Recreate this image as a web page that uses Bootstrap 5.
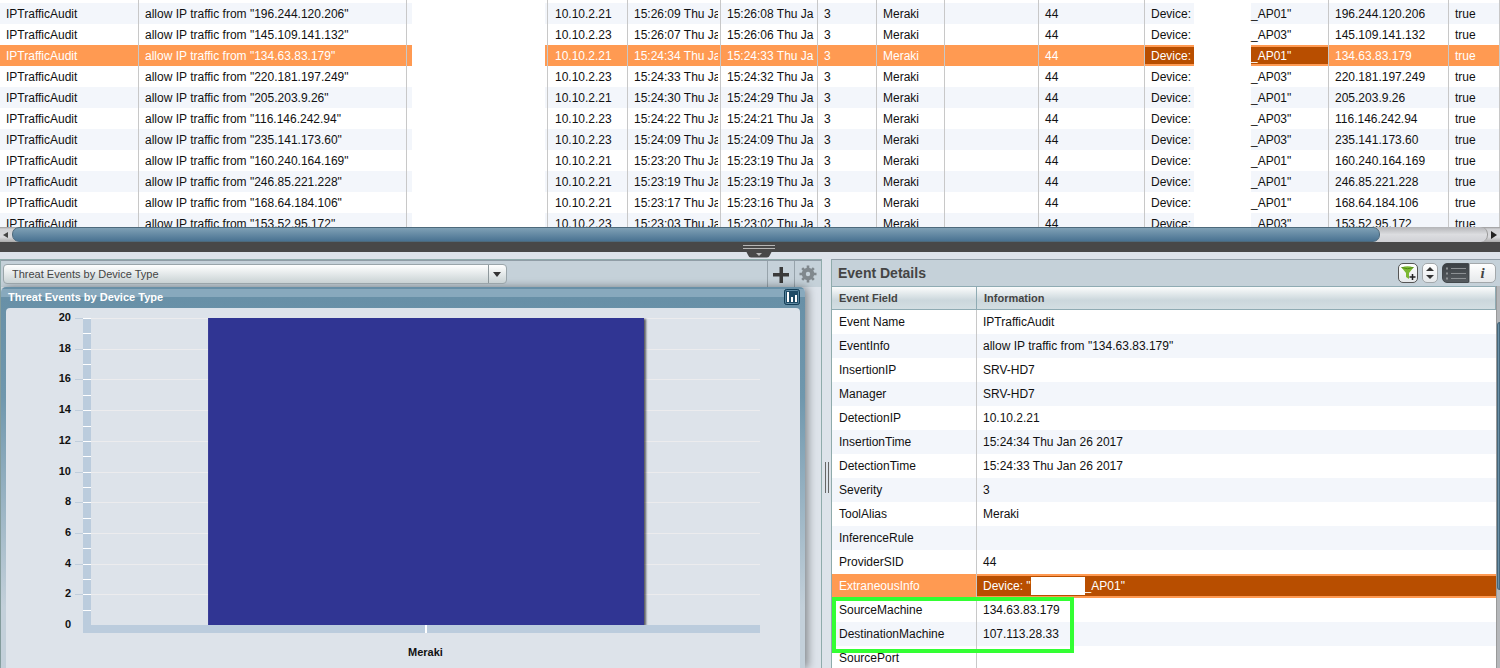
<!DOCTYPE html>
<html lang="en">
<head>
<meta charset="utf-8">
<meta name="viewport" content="width=device-width, initial-scale=1">
<title>Threat Events</title>
<link rel="stylesheet" href="https://cdn.jsdelivr.net/npm/bootstrap@5.3.0/dist/css/bootstrap.min.css">
<style>
  :root { --line:#c8c8c8; --stripe:#f3f6fb; --sel:#ff9a52; --seldark:#b84e00; --canvas:#dde3ea; --bar:#c5d1d9; --edge:#8fabab; }
  body { font-family:"Liberation Sans", Arial, sans-serif; font-size:12px; line-height:16px; color:#111; background:var(--canvas); }
  .events-pane { flex:0 0 34%; background:#fff; }
  .grid-table { table-layout:fixed; width:100%; border-collapse:separate; border-spacing:0; white-space:nowrap; }
  .grid-table td { height:21px; padding:3px 2px 2px 6px; border-right:1px solid var(--line); overflow:hidden; line-height:16px; }
  .grid-table td:nth-child(3) { padding:0 2px 0 5px; }
  .grid-table td:nth-child(4) { padding-left:7px; }
  .grid-table td > div { overflow:hidden; }
  .grid-table tr:nth-child(even) td { background:var(--stripe); }
  .grid-table tr:first-child td { height:3px; padding:0; background:#fff; }
  .grid-table tr.picked td { background:var(--sel); color:#fff; }
  .grid-table td.device { padding:0 0 0 6px; }
  .grid-table tr.picked td.device { background:linear-gradient(var(--sel) 2px,var(--seldark) 2px,var(--seldark) 19px,var(--sel) 19px); }
  .device .lead-in { width:43px; }
  .blank { background:#fff; height:21px; }
  .device .blank { width:57px; }
  .hscroll { height:15px; background:linear-gradient(#999,#d0d1d4 2px,#d9dadd 10px,#aaa); }
  .hscroll button, .tool { border:0; background:none; padding:0; }
  .hscroll button { width:12px; line-height:0; }
  .hscroll .track { border-radius:7px; background:linear-gradient(#b4b5b8,#dcdde0 50%,#d0d1d5); border-right:1px solid #999; }
  .hscroll .thumb { width:1368px; max-width:93%; border-radius:7px; background:linear-gradient(#7fa0b5,#4a7392); border:1px solid #4d6a7c; }
  .splitter { height:10px; background:#484848; }
  .splitter svg { top:2px; left:742px; }
  .workspace { padding-top:7px; }
  .left-pane { flex:0 0 822px; border:1px solid var(--edge); border-bottom:0; }
  .pane-tools { height:27px; background:var(--bar); }
  .left-pane > .pane-tools { border-top:1px solid #909da6; }
  .report-pick { width:504px; height:20px; margin-left:2px; padding:0 8px; font-size:11px; line-height:16px; border:1px solid #9aa5aa; border-radius:4px; color:#444; appearance:none; background:linear-gradient(#fff,#c9d2d4); }
  .pick-wrap .arrow { right:0; top:1px; pointer-events:none; }
  .tool { width:27px; height:27px; border-left:1px solid #97a3ab; }
  .chart-shell { background:var(--canvas); }
  .chart-window { width:804px; padding:0 5px; border-radius:5px 5px 0 0; background:linear-gradient(#6890a7 2px,#88a9bd 2px,#88a9bd 10px,#6890a7 10px,#6f97ad 110px,#c3d0da 320px); box-shadow:3px 0 8px rgba(0,0,0,.4); }
  .chart-title { height:21px; padding-bottom:2px; font-size:11px; line-height:16px; font-weight:700; color:#fff; padding-left:2px; }
  .chart-body { background:var(--canvas); border-radius:4px 4px 0 0; padding:10px 40px 35px 0; font-size:11px; font-weight:700; }
  .y-labels { width:65px; margin:-9px 0 -7px; text-align:right; }
  .y-labels span { line-height:16px; }
  .ticks { width:8px; margin-left:4px; }
  .ticks div, .lines div { border-top:1px solid #c0cedc; }
  .y-axis { width:8px; background:#bbccdd; }
  .y-axis div { border-top:1px solid #fff; }
  .lines div { border-color:#ececee; }
  .series { left:17.5%; width:65.2%; background:#303593; box-shadow:2px 1px 2px rgba(0,0,0,.6); clip-path:inset(0 -6px 0 0); }
  .x-axis { height:8px; margin-left:77px; background:#bbccdd; }
  .x-axis i { width:2px; height:8px; background:#fff; margin-left:8px; }
  .x-label { margin:11px 0 -35px 85px; height:24px; line-height:16px; }
  .grip { flex:0 0 9px; padding-bottom:0; }
  .grip i { width:4px; height:31px; margin-top:28px; border:solid #666; border-width:0 1px; }
  .details-pane { min-width:0; border-left:1px solid var(--edge); border-top:1px solid #909da6; background:#fff; }
  .details-pane .pane-tools { height:26px; }
  .details-pane h2 { font-size:14px; line-height:26px; margin:0; font-weight:700; color:#444; padding-left:6px; }
  .mini { height:20px; padding:0; border:1px solid #a3a8ab; border-radius:5px; background:linear-gradient(#fff,#e6e9eb); line-height:0; }
  .mini.wide { width:27px; }
  .mini.dark { background:linear-gradient(#3c4145,#565b5f); border-color:#44494d; border-radius:5px 0 0 5px; }
  .mini.info { border-radius:0 5px 5px 0; font:italic 700 15px/18px "Liberation Serif", serif; color:#444; }
  .detail-table { table-layout:fixed; width:100%; border-collapse:separate; border-spacing:0; white-space:nowrap; }
  .detail-table th { height:24px; padding:0 7px 1px; font-size:11px; line-height:16px; color:#444; background:linear-gradient(#fbfcfc,#cbd7dc 60%,#d3dee2); border:solid #8fabb3; border-width:1px 1px 1px 0; }
  .detail-table td { height:24px; padding:0 7px; line-height:16px; border-right:1px solid var(--line); }
  .detail-table td:last-child { border-right:0; padding-left:6px; }
  .detail-table tbody tr:nth-child(even) td { background:var(--stripe); }
  .detail-table tbody tr.picked td { background:var(--sel); color:#fff; }
  .detail-table tbody tr.picked td:last-child { background:linear-gradient(var(--sel) 2px,var(--seldark) 2px,var(--seldark) 22px,var(--sel) 22px); }
  .detail-table .blank { width:54px; height:18px; }
  .vscroll { width:4px; background:#b5b7ba; border-left:1px solid #999; padding-top:36px; }
  .vscroll i { height:268px; border-radius:6px 0 0 6px; background:#6a90a8; border:1px solid #46677a; }
  .outline-box { left:0; top:311px; width:242px; height:56px; border:4px solid #33ff33; pointer-events:none; }
</style>
</head>
<body class="d-flex flex-column vh-100 overflow-hidden">
<section class="events-pane overflow-hidden">
  <table class="grid-table">
    <colgroup><col style="width:139px"><col style="width:268px"><col style="width:141px"><col style="width:80px"><col style="width:93px"><col style="width:97px"><col style="width:59px"><col style="width:68px"><col style="width:94px"><col style="width:106px"><col style="width:184px"><col style="width:120px"><col></colgroup>
    <tbody id="events"></tbody>
  </table>
</section>
<div class="hscroll d-flex flex-shrink-0">
  <button type="button" aria-label="Scroll left"><svg width="6" height="8"><path d="M5 1v6L0 4z" fill="#444"/></svg></button>
  <div class="track flex-fill d-flex"><div class="thumb"></div></div>
  <button type="button" aria-label="Scroll right"><svg width="6" height="8"><path d="M0 0v8l6-4z" fill="#222"/></svg></button>
</div>
<div class="splitter flex-shrink-0 position-relative"><svg class="position-absolute" width="34" height="14" viewBox="0 0 34 14"><path d="M2 5H32Q29 8 28 11Q27 13.500 25 13.500H9Q7 13.500 6 11Q5 8 2 5z" fill="#484848"/><path d="M1 1.500H33M1 4.500H33" stroke="#b5b5b5"/><path d="M14 9h6l-3 3z" fill="#bbb"/></svg></div>
<main class="workspace d-flex flex-fill overflow-hidden">
  <section class="left-pane d-flex flex-column">
    <div class="pane-tools d-flex align-items-center flex-shrink-0">
      <div class="pick-wrap position-relative me-auto">
        <select class="report-pick d-block" aria-label="Report"><option>Threat Events by Device Type</option></select>
        <svg class="arrow position-absolute" width="19" height="18"><path d="M.5 0v18" stroke="#8e989c"/><path d="M5 7h8l-4 5z" fill="#333"/></svg>
      </div>
      <button class="tool" type="button" aria-label="Add"><svg width="16" height="16"><path d="M6.500 0h3.500v6h6v3.500h-6V16H6.500V9.500H0V6h6.500z" fill="#3a3a3a"/></svg></button>
      <button class="tool" type="button" aria-label="Settings"><svg width="18" height="18" viewBox="-9 -9 18 18"><g fill="none" stroke="#80888d"><circle r="4.200" stroke-width="4"/><path stroke-width="2.600" d="M0-8.500V-5M0 8.500V5M-8.500 0H-5M8.500 0H5M-5.800-5.800-4-4M5.800 5.800 4 4M-5.800 5.800-4 4M5.800-5.800 4-4"/></g></svg></button>
    </div>
    <div class="chart-shell flex-fill d-flex">
      <div class="chart-window d-flex flex-column">
        <div class="chart-title d-flex align-items-center justify-content-between"><span>Threat Events by Device Type</span>
          <button class="border-0 p-0 bg-transparent lh-1" type="button" aria-label="Chart options"><svg class="d-block" width="16" height="16"><rect x=".5" y=".5" width="15" height="15" rx="2" fill="#1f4b66" stroke="#123c55"/><rect x="1.500" y="1.500" width="13" height="13" rx="1" fill="none" stroke="#5f8aa3"/><path d="M3 3h2v10H3zM7 8h2v5H7zM11 6h2v7h-2z" fill="#fff"/></svg></button></div>
        <div class="chart-body flex-fill d-flex flex-column">
          <div class="flex-fill d-flex">
            <div class="y-labels d-flex flex-column justify-content-between" id="ylabels"></div>
            <div class="ticks d-flex flex-column" data-steps="10"></div>
            <div class="y-axis d-flex flex-column" data-steps="20"></div>
            <div class="flex-fill position-relative d-flex">
              <div class="lines flex-fill d-flex flex-column" data-steps="10"></div>
              <div class="series position-absolute top-0 bottom-0"></div>
            </div>
          </div>
          <div class="x-axis d-flex justify-content-center"><i></i></div>
          <div class="x-label text-center">Meraki</div>
        </div>
      </div>
    </div>
  </section>
  <div class="grip d-flex align-items-center justify-content-center"><i></i></div>
  <section class="details-pane flex-fill d-flex flex-column overflow-hidden">
    <div class="pane-tools d-flex align-items-center flex-shrink-0 pe-1">
      <h2 class="me-auto">Event Details</h2>
      <button class="mini me-1" type="button" aria-label="Add filter" style="border-color:#555"><svg width="18" height="18"><path d="M2.500 3.500Q8.500 1 14.500 3.500L10 9v6L7 13V9z" fill="#7cb832"/><path d="M2.500 3.500Q8.500 6 14.500 3.500" fill="none" stroke="#4f8a12"/><path d="M13.500 10v6M10.500 13h6" stroke="#222" stroke-width="1.500"/></svg></button>
      <button class="mini me-1" type="button" aria-label="Previous or next event"><svg width="14" height="18"><path d="M3 7h8L7 3zM3 11h8l-4 4z" fill="#333"/></svg></button>
      <button class="mini wide dark" type="button" aria-label="List view"><svg width="23" height="18"><path d="M7 4.500h15M7 9.500h15M7 14.500h15" stroke="#8d9194"/><path d="M2 4.500h2M2 9.500h2M2 14.500h2" stroke="#8d9194" stroke-width="2"/></svg></button>
      <button class="mini wide info" type="button" aria-label="Info">i</button>
    </div>
    <div class="d-flex position-relative">
      <table class="detail-table flex-fill">
        <colgroup><col style="width:145px"><col></colgroup>
        <thead><tr><th>Event Field</th><th>Information</th></tr></thead>
        <tbody id="details"></tbody>
      </table>
      <div class="vscroll"><i class="d-block"></i></div>
      <div class="outline-box position-absolute"></div>
    </div>
  </section>
</main>
<script src="https://cdn.jsdelivr.net/npm/bootstrap@5.3.0/dist/js/bootstrap.bundle.min.js"></script>
<script>
  const events = [
    ["196.244.120.206", 1, "15:26:09", "15:26:08"], ["145.109.141.132", 3, "15:26:07", "15:26:06"],
    ["134.63.83.179", 1, "15:24:34", "15:24:33"], ["220.181.197.249", 3, "15:24:33", "15:24:32"],
    ["205.203.9.26", 1, "15:24:30", "15:24:29"], ["116.146.242.94", 3, "15:24:22", "15:24:21"],
    ["235.141.173.60", 3, "15:24:09", "15:24:09"], ["160.240.164.169", 1, "15:23:20", "15:23:19"],
    ["246.85.221.228", 1, "15:23:19", "15:23:19"], ["168.64.184.106", 1, "15:23:17", "15:23:16"],
    ["153.52.95.172", 3, "15:23:03", "15:23:02"]
  ];
  document.getElementById("events").innerHTML = "<tr>" + "<td></td>".repeat(13) + "</tr>" + events.map(([ip, ap, ins, det], i) =>
    `<tr${i === 2 ? ' class="picked"' : ""}><td>IPTrafficAudit</td><td>allow IP traffic from "${ip}"</td><td><div class="blank"></div></td><td>10.10.2.2${ap}</td><td><div>${ins} Thu Ja</div></td><td><div>${det} Thu Ja</div></td><td>3</td><td>Meraki</td><td></td><td>44</td><td class="device"><div class="d-flex align-items-center"><span class="lead-in">Device:</span><span class="blank"></span><span>_AP0${ap}"</span></div></td><td>${ip}</td><td>true</td></tr>`).join("");
  const details = [["Event Name", "IPTrafficAudit"], ["EventInfo", 'allow IP traffic from "134.63.83.179"'], ["InsertionIP", "SRV-HD7"], ["Manager", "SRV-HD7"], ["DetectionIP", "10.10.2.21"], ["InsertionTime", "15:24:34 Thu Jan 26 2017"], ["DetectionTime", "15:24:33 Thu Jan 26 2017"], ["Severity", "3"], ["ToolAlias", "Meraki"], ["InferenceRule", ""], ["ProviderSID", "44"], ["ExtraneousInfo", '<div class="d-flex align-items-center"><span>Device: "</span><span class="blank"></span><span>_AP01"</span></div>'], ["SourceMachine", "134.63.83.179"], ["DestinationMachine", "107.113.28.33"], ["SourcePort", ""]];
  document.getElementById("details").innerHTML = details.map(([k, v]) => `<tr${k === "ExtraneousInfo" ? ' class="picked"' : ""}><td>${k}</td><td>${v}</td></tr>`).join("");
  document.getElementById("ylabels").innerHTML = Array.from({ length: 11 }, (_, i) => `<span>${20 - 2 * i}</span>`).join("");
  document.querySelectorAll("[data-steps]").forEach(el => { el.innerHTML = '<div class="flex-fill"></div>'.repeat(el.dataset.steps); });
</script>
</body>
</html>
